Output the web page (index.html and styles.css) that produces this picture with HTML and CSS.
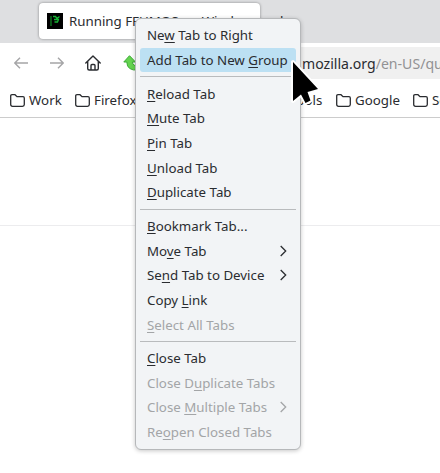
FILE: index.html
```html
<!DOCTYPE html>
<html lang="en">
<head>
<meta charset="utf-8">
<title>Tab context menu</title>
<link rel="stylesheet" href="styles.css">
</head>
<body>
<div class="browser">
  <header class="tabstrip">
    <div class="tab">
      <svg class="favicon" width="16" height="16" viewBox="0 0 16 16"><rect width="16" height="16"/><path d="M4 3v10" fill="none" stroke="#0f8a24" stroke-width="1.2"/><path d="M6 3.500h2.500l1.500 2 2.500-2M7 6.500h4.500l-1 2.500H7.500" fill="none" stroke="#17b535" stroke-width="1.3"/></svg>
      <span class="tab-title">Running FFUMOS on Windows H</span>
    </div>
    <span class="next-tab">l</span>
  </header>
  <nav class="toolbar">
    <svg class="arrow" width="14" height="12" viewBox="0 0 14 12"><path d="M14 6H1M6 .7L.8 6 6 11.300"/></svg>
    <svg class="arrow" width="14" height="12" viewBox="0 0 14 12"><path d="M0 6H13M8 .7L13.200 6 8 11.300"/></svg>
    <svg class="home" width="16" height="16" viewBox="0 0 16 16"><path d="M.8 8L8 1 15.200 8M2.700 6.500v7q0 1.500 1.500 1.500h7.600q1.500 0 1.500-1.500V6.500M6 15V10.500q0-1 1-1h2q1 0 1 1V15"/></svg>
    <svg class="reload" width="20" height="16" viewBox="0 0 20 16"><path d="M6.500 .7L12.500 7H9.500Q9.500 11 15 11V15Q4 16 3.800 7H.8Z"/></svg>
    <div class="url">mozilla.org<span class="path">/en-US/questions</span></div>
  </nav>
  <div class="bookmarks">
    <span class="bookmark work"><svg class="folder" width="15" height="13" viewBox="0 0 15 13"><path d="M.7 10.500V2Q.7.7 2 .7H5L7 2.700H13Q14.300 2.700 14.300 4V10.500Q14.300 12.300 12.500 12.300H2.500Q.7 12.300.7 10.500Z"/></svg>Work</span>
    <span class="bookmark firefox"><svg class="folder" width="15" height="13" viewBox="0 0 15 13"><path d="M.7 10.500V2Q.7.7 2 .7H5L7 2.700H13Q14.300 2.700 14.300 4V10.500Q14.300 12.300 12.500 12.300H2.500Q.7 12.300.7 10.500Z"/></svg>Firefox</span>
    <span class="bookmark tools">Tools</span>
    <span class="bookmark google"><svg class="folder" width="15" height="13" viewBox="0 0 15 13"><path d="M.7 10.500V2Q.7.7 2 .7H5L7 2.700H13Q14.300 2.700 14.300 4V10.500Q14.300 12.300 12.500 12.300H2.500Q.7 12.300.7 10.500Z"/></svg>Google</span>
    <span class="bookmark"><svg class="folder" width="15" height="13" viewBox="0 0 15 13"><path d="M.7 10.500V2Q.7.7 2 .7H5L7 2.700H13Q14.300 2.700 14.300 4V10.500Q14.300 12.300 12.500 12.300H2.500Q.7 12.300.7 10.500Z"/></svg>Search</span>
  </div>
  <main class="page"><div class="page-head"></div></main>
</div>
<div class="menu">
  <div class="item"><span>Ne<u>w</u> Tab to Right</span></div>
  <div class="item active"><span>Add Tab to New <u>G</u>roup</span></div>
  <div class="sep"></div>
  <div class="item"><span><u>R</u>eload Tab</span></div>
  <div class="item"><span><u>M</u>ute Tab</span></div>
  <div class="item"><span><u>P</u>in Tab</span></div>
  <div class="item"><span><u>U</u>nload Tab</span></div>
  <div class="item"><span><u>D</u>uplicate Tab</span></div>
  <div class="sep"></div>
  <div class="item"><span><u>B</u>ookmark Tab...</span></div>
  <div class="item"><span>Mo<u>v</u>e Tab</span><svg class="chev" width="7" height="12" viewBox="0 0 7 12"><path d="M.7 1L5.700 6 .7 11"/></svg></div>
  <div class="item"><span>Se<u>n</u>d Tab to Device</span><svg class="chev" width="7" height="12" viewBox="0 0 7 12"><path d="M.7 1L5.700 6 .7 11"/></svg></div>
  <div class="item"><span>Copy <u>L</u>ink</span></div>
  <div class="item disabled"><span><u>S</u>elect All Tabs</span></div>
  <div class="sep sep-last"></div>
  <div class="item"><span><u>C</u>lose Tab</span></div>
  <div class="item disabled"><span>Close D<u>u</u>plicate Tabs</span></div>
  <div class="item disabled"><span>Close <u>M</u>ultiple Tabs</span><svg class="chev" width="7" height="12" viewBox="0 0 7 12"><path d="M.7 1L5.700 6 .7 11"/></svg></div>
  <div class="item disabled"><span>Re<u>o</u>pen Closed Tabs</span></div>
</div>
<svg class="cursor" width="34" height="52" viewBox="0 0 34 52"><path d="M3 4V43L11 36.500 15.500 45 20.500 42.500 17.500 34 28 31Z"/></svg>
</body>
</html>
```
FILE: styles.css
```css
* { box-sizing: border-box; }
body { margin: 0; width: 440px; height: 473px; overflow: hidden; background: #fff; color: #2a2c30; font: 13.3px/20px "Noto Sans", sans-serif; }
svg { flex: none; display: block; }
.browser { width: 440px; height: 473px; overflow: hidden; display: flex; flex-direction: column; }
.tabstrip { height: 43px; flex: none; background: #dedfe1; display: flex; padding: 3px 0 4px 39px; }
.tab { width: 221px; height: 36px; background: #fff; border-radius: 4px; box-shadow: 0 0 3px rgba(0,0,0,.4); display: flex; align-items: center; padding-left: 8px; gap: 6px; white-space: nowrap; overflow: hidden; }
.tab-title { line-height: 20px; }
.next-tab { margin: 8px 0 0 20px; }
.toolbar { height: 40px; flex: none; display: flex; align-items: center; padding-left: 14px; }
.arrow { fill: none; stroke: #a5a5a7; stroke-width: 1.4; margin-right: 22px; }
.home { fill: none; stroke: #2a2c30; stroke-width: 1.4; stroke-linejoin: round; stroke-linecap: round; margin-left: -1.5px; }
.reload { fill: #64d34f; stroke: #3bab35; margin-left: 22.5px; }
.url { margin-left: auto; width: 200px; height: 32px; background: #f0f0f0; padding: 0 0 0 62px; font-size: 14.1px; line-height: 33px; white-space: nowrap; overflow: hidden; }
.path { color: #929294; }
.bookmarks { height: 35px; flex: none; border-bottom: 1px solid #ccc; display: flex; align-items: center; padding-left: 10px; white-space: nowrap; }
.bookmark { display: flex; align-items: center; gap: 4px; flex: none; }
.folder { fill: none; stroke: #2a2c30; stroke-width: 1.3; }
.work { width: 65px; }
.firefox { width: 215px; }
.tools { width: 46px; }
.google { width: 77px; }
.page { flex: 1; }
.page-head { height: 108px; border-bottom: 1px solid #ececee; }
.menu { position: absolute; left: 135px; top: 18px; width: 166px; height: 432px; padding: 4px; background: #f2f4f6; border: 1px solid #b6b8ba; border-radius: 6px; box-shadow: 0 1px 4px rgba(0,0,0,.22); }
.item { height: 24.62px; padding: 0 9px 0 7px; display: flex; align-items: center; justify-content: space-between; border-radius: 3px; white-space: nowrap; }
.item u { text-decoration-thickness: 1px; text-underline-offset: 2px; text-decoration-skip-ink: none; }
.active { background: #bce0f3; }
.disabled { color: #a3a5a7; }
.sep { height: 1px; margin: 4.2px 0 4.07px; background: #b9bbbd; }
.sep-last { margin-bottom: 3.9px; }
.chev { fill: none; stroke: currentColor; stroke-width: 1.3; }
.cursor { position: absolute; left: 290px; top: 58px; fill: #000; stroke: #fff; stroke-width: 4; stroke-linejoin: round; paint-order: stroke; }
```
